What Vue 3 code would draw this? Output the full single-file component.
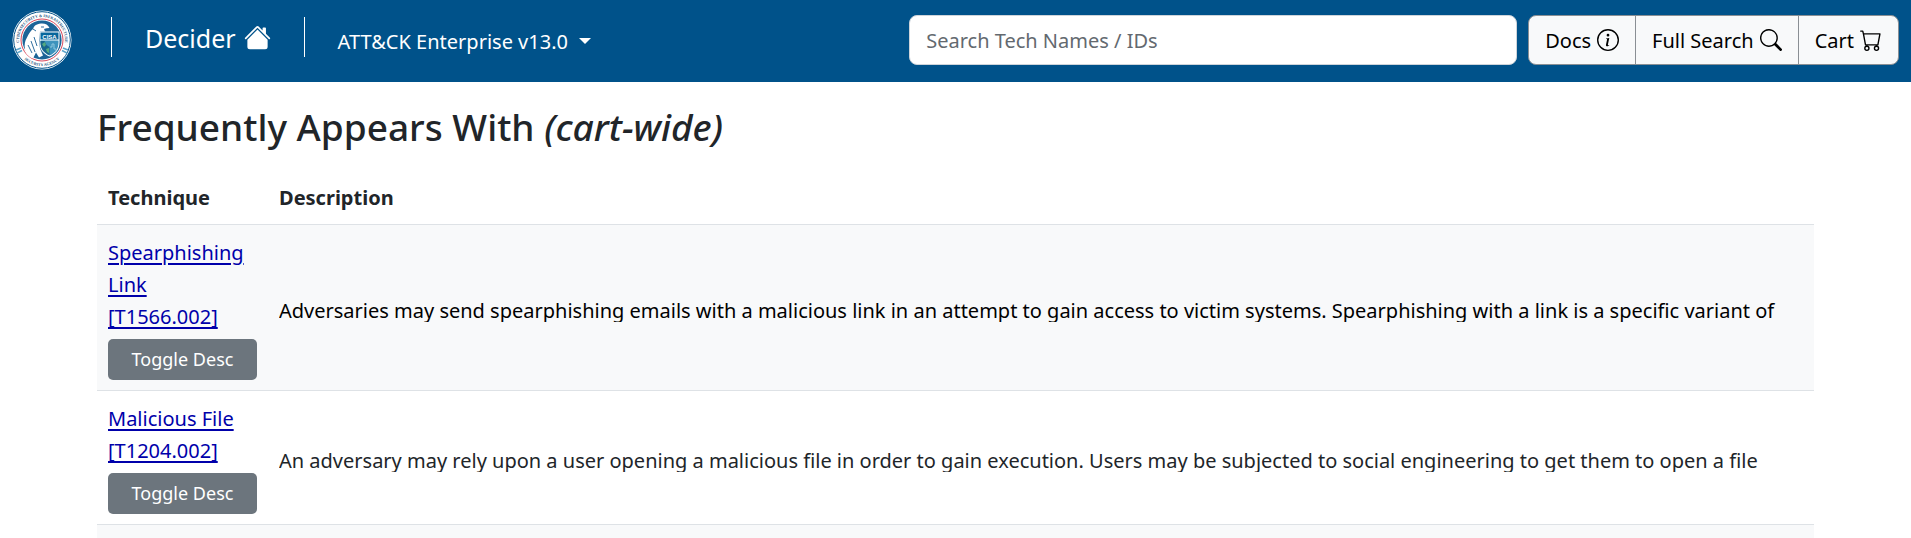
<script setup>
const rows = [
  {
    name: 'Spearphishing Link',
    id: 'T1566.002',
    desc: 'Adversaries may send spearphishing emails with a malicious link in an attempt to gain access to victim systems. Spearphishing with a link is a specific variant of',
    strong: true,
  },
  {
    name: 'Malicious File',
    id: 'T1204.002',
    desc: 'An adversary may rely upon a user opening a malicious file in order to gain execution. Users may be subjected to social engineering to get them to open a file',
    strong: false,
  },
]
</script>

<template>
  <header class="navbar">
    <a class="logo" href="#" aria-label="CISA">
      <svg viewBox="0 0 60 60" width="60" height="60" aria-hidden="true">
        <defs>
          <path id="arc-top" d="M8.400 38 A23 23 0 1 1 51.600 38" />
          <path id="arc-bottom" d="M9 45.500 A26.200 26.200 0 0 0 51 45.500" />
        </defs>
        <circle cx="30" cy="30" r="29.500" fill="#fff" />
        <circle cx="30" cy="30" r="28.300" fill="none" stroke="#00528a" stroke-width="1" />
        <circle cx="30" cy="30" r="21" fill="#fff" stroke="#d9465a" stroke-width="1" />
        <circle cx="30" cy="30" r="19.600" fill="#1c6497" />
        <text class="seal-text"><textPath href="#arc-top" startOffset="50%" text-anchor="middle">CYBERSECURITY &amp; INFRASTRUCTURE</textPath></text>
        <text class="seal-text"><textPath href="#arc-bottom" startOffset="50%" text-anchor="middle">SECURITY AGENCY</textPath></text>
        <path d="M4 40l5-2M5 43l5-2.500M56 40l-5-2M55 43l-5-2.500" stroke="#5da3c9" stroke-width="1.500" />
        <path d="M21 19c1-3 3-5 8-5.500 4-.3 7 1 8.500 4.500l-3 .2-2.500.8 1 2.500h-5l-1 9 1 8 3 7-4 2-3-5-3 6c-5-2-8-6-8-9-1-5 0-9 2-12 2-4 3-6 6-8.500z" fill="#fff" />
        <path d="M16 35l4 8M19 31l4 11M22 27l3 9M21 19l3 2M29 17h3" stroke="#2f6f9f" stroke-width="1" fill="none" />
        <path d="M27.500 21.500h20v11c0 8-5 12-10 14-5-2-10-6-10-14z" fill="#fff" />
        <path d="M28.500 22.500h18v7h-18z" fill="#07679c" />
        <path d="M28.500 30.500h18v2c0 7-4 11-9 13-5-2-9-6-9-13z" fill="#3d93bd" />
        <path d="M28.500 31h4l2 4 3 2v8c-5-2-9-6-9-13z" fill="#18658d" />
        <path d="M30 34l3-2 1 3-2 2zM34 39l3-1v5l-2-1z" fill="#54aa80" />
        <path d="M38 37h2v-3h2v5h2v3" stroke="#8ec6de" fill="none" />
        <text class="seal-name" x="37.500" y="28.500" text-anchor="middle">CISA</text>
      </svg>
    </a>
    <span class="rule"></span>
    <a class="brand" href="#">
      <span>Decider</span>
      <svg viewBox="0 0 16 16" width="27" height="27" fill="currentColor" aria-hidden="true">
        <path d="M8.707 1.500a1 1 0 0 0-1.414 0L.646 8.146a.5.5 0 0 0 .708.708L8 2.207l6.646 6.647a.5.5 0 0 0 .708-.708L13 5.793V2.500a.5.5 0 0 0-.5-.5h-1a.5.5 0 0 0-.5.5v1.293L8.707 1.500Z" />
        <path d="m8 3.293 6 6V13.500a1.500 1.500 0 0 1-1.500 1.500h-9A1.500 1.500 0 0 1 2 13.500V9.293l6-6Z" />
      </svg>
    </a>
    <span class="rule"></span>
    <button class="version" type="button">ATT&amp;CK Enterprise v13.0<span class="caret"></span></button>
    <input class="search" type="text" placeholder="Search Tech Names / IDs" aria-label="Search Tech Names / IDs" />
    <nav class="group">
      <a href="#">
        Docs
        <svg viewBox="0 0 16 16" width="22" height="22" fill="currentColor" aria-hidden="true">
          <path d="M8 15A7 7 0 1 1 8 1a7 7 0 0 1 0 14zm0 1A8 8 0 1 0 8 0a8 8 0 0 0 0 16z" />
          <path d="m8.930 6.588-2.290.287-.082.380.450.083c.294.070.352.176.288.469l-.738 3.468c-.194.897.105 1.319.808 1.319.545 0 1.178-.252 1.465-.598l.088-.416c-.2.176-.492.246-.686.246-.275 0-.375-.193-.304-.533L8.930 6.588zM9 4.500a1 1 0 1 1-2 0 1 1 0 0 1 2 0z" />
        </svg>
      </a>
      <a href="#">
        Full Search
        <svg viewBox="0 0 16 16" width="22" height="22" fill="currentColor" aria-hidden="true">
          <path d="M11.742 10.344a6.500 6.500 0 1 0-1.397 1.398h-.001c.03.04.062.078.098.115l3.850 3.850a1 1 0 0 0 1.415-1.414l-3.850-3.850a1.007 1.007 0 0 0-.115-.1zM12 6.500a5.500 5.500 0 1 1-11 0 5.500 5.500 0 0 1 11 0z" />
        </svg>
      </a>
      <a href="#">
        Cart
        <svg viewBox="0 0 16 16" width="22" height="22" fill="currentColor" aria-hidden="true">
          <path d="M0 1.500A.5.5 0 0 1 .5 1H2a.5.5 0 0 1 .485.379L2.890 3H14.500a.5.5 0 0 1 .491.592l-1.500 8A.5.5 0 0 1 13 12H4a.5.5 0 0 1-.491-.408L2.010 3.607 1.610 2H.5a.5.5 0 0 1-.5-.5zM3.102 4l1.313 7h8.170l1.313-7H3.102zM5 12a2 2 0 1 0 0 4 2 2 0 0 0 0-4zm7 0a2 2 0 1 0 0 4 2 2 0 0 0 0-4zm-7 1a1 1 0 1 1 0 2 1 1 0 0 1 0-2zm7 0a1 1 0 1 1 0 2 1 1 0 0 1 0-2z" />
        </svg>
      </a>
    </nav>
  </header>

  <main class="content">
    <h2>Frequently Appears With <em>(cart-wide)</em></h2>
    <table>
      <thead>
        <tr>
          <th class="tech" scope="col">Technique</th>
          <th scope="col">Description</th>
        </tr>
      </thead>
      <tbody>
        <tr v-for="row in rows" :key="row.id">
          <td>
            <a class="link" href="#">{{ row.name }}<br />[{{ row.id }}]</a>
            <button class="toggle" type="button">Toggle Desc</button>
          </td>
          <td>
            <div class="desc" :class="{ strong: row.strong }">{{ row.desc }}</div>
          </td>
        </tr>
        <tr class="next">
          <td></td>
          <td></td>
        </tr>
      </tbody>
    </table>
  </main>
</template>

<style>
body {
  margin: 0;
  background: #fff;
}
</style>

<style scoped>
.navbar,
.content,
.navbar button,
.navbar input,
.content button {
  font-family: "Noto Sans", "Open Sans", sans-serif;
  font-size: 20px;
}
.navbar {
  display: flex;
  align-items: center;
  box-sizing: border-box;
  height: 82px;
  padding: 0 12px;
  background: #00528a;
  color: #fff;
}
.logo {
  display: block;
  height: 60px;
  margin-right: 6px;
  margin-bottom: 2px;
}
.seal-text {
  font: 700 4px "Liberation Serif", serif;
  fill: #174f7c;
}
.seal-name {
  font: 700 6px "Liberation Sans", sans-serif;
  fill: #fff;
}
.rule {
  flex: none;
  width: 1px;
  height: 40px;
  margin: 0 33px 8px;
  background: #fff;
}
.brand {
  display: flex;
  align-items: center;
  gap: 8px;
  margin-bottom: 6px;
  color: #fff;
  font-size: 25px;
  line-height: 40px;
  text-decoration: none;
  white-space: nowrap;
}
.brand svg {
  margin-bottom: 2px;
}
.version {
  display: flex;
  align-items: center;
  gap: 11px;
  padding: 0;
  border: 0;
  background: none;
  color: #fff;
  white-space: nowrap;
}
.caret {
  border: 6px solid transparent;
  border-top-color: #fff;
  border-bottom: 0;
}
.search {
  flex: 0 1 608px;
  box-sizing: border-box;
  min-width: 100px;
  height: 50px;
  margin: 0 11px 2px auto;
  padding: 0 16px;
  border: 1px solid #ced4da;
  border-radius: 8px;
  background: #fff;
  color: #212529;
}
.search::placeholder {
  color: #63696f;
  opacity: 1;
}
.group {
  display: flex;
  box-sizing: border-box;
  height: 50px;
  margin-bottom: 2px;
  border: 1px solid #8a8f94;
  border-radius: 8px;
  background: #f8f9fa;
}
.group a {
  display: flex;
  align-items: center;
  gap: 6px;
  padding: 0 16px;
  color: #000;
  text-decoration: none;
  white-space: nowrap;
}
.group a + a {
  border-left: 1px solid #8a8f94;
}
.content {
  padding: 22px 97px 0;
  color: #212529;
}
h2 {
  margin: 0;
  font-size: 37px;
  font-weight: 500;
  line-height: 46px;
}
table {
  width: 100%;
  margin-top: 22px;
  border-collapse: separate;
  border-spacing: 0;
  table-layout: fixed;
}
th,
td {
  padding: 12px 11px 10px;
  border-bottom: 1px solid #dee2e6;
  text-align: left;
  vertical-align: middle;
}
th {
  padding: 10px 11px;
  font-weight: 700;
  line-height: 32px;
}
.tech {
  width: 149px;
}
tbody tr:nth-child(odd) {
  background: #f8f9fa;
}
.link {
  display: block;
  color: #00a;
  line-height: 32px;
  text-decoration-thickness: 2px;
  text-underline-offset: 3px;
}
.content .toggle {
  display: block;
  width: 100%;
  height: 41px;
  margin-top: 6px;
  padding: 0 0 2px;
  border: 0;
  border-radius: 5px;
  background: #6c757d;
  color: #fff;
  font-size: 18px;
}
.desc {
  height: 26px;
  overflow: hidden;
  line-height: 30px;
  white-space: nowrap;
}
.desc.strong {
  color: #000;
}
.next td {
  height: 13px;
  padding: 0;
  border: 0;
}
</style>
